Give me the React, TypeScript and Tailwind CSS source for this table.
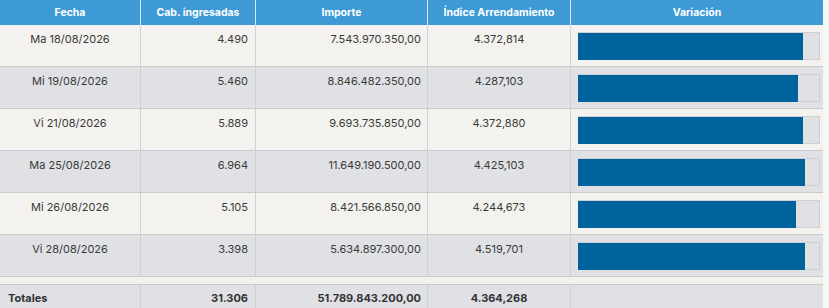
import React from "react";

const rows = [
  { f: "Ma 18/08/2026", c: "4.490", i: "7.543.970.350,00", x: "4.372,814", w: 225 },
  { f: "Mi 19/08/2026", c: "5.460", i: "8.846.482.350,00", x: "4.287,103", w: 220 },
  { f: "Vi 21/08/2026", c: "5.889", i: "9.693.735.850,00", x: "4.372,880", w: 225 },
  { f: "Ma 25/08/2026", c: "6.964", i: "11.649.190.500,00", x: "4.425,103", w: 227 },
  { f: "Mi 26/08/2026", c: "5.105", i: "8.421.566.850,00", x: "4.244,673", w: 218 },
  { f: "Vi 28/08/2026", c: "3.398", i: "5.634.897.300,00", x: "4.519,701", w: 227 },
];

const grid = "grid grid-cols-[141px_115px_172px_143px_252px]";

export default function App() {
  return (
    <div
      className="w-[829px] h-[308px] overflow-hidden bg-[#f7f7f7] text-[11px] text-[#3a3a3a]"
      style={{ fontFamily: "Inter, 'Noto Sans', sans-serif" }}
    >
      <div className="w-[823px]">
        <div className={`${grid} h-[25px] bg-[#3d9ad5] text-white font-bold text-[10.5px]`}>
          {["Fecha", "Cab. ingresadas", "Importe", "Índice Arrendamiento", "Variación"].map((h, k) => (
            <div
              key={h}
              className={`flex items-center justify-center ${k < 4 ? "border-r border-[#d6e9f6]" : ""}`}
            >
              {h}
            </div>
          ))}
        </div>
        {rows.map((r, k) => (
          <div
            key={r.f}
            className={`${grid} h-[42px] border-b border-[#c8cacd] ${k % 2 === 0 ? "bg-[#f3f2ee]" : "bg-[#dfe1e5]"}`}
          >
            <div className="border-r border-[#cfd0d2] text-center pt-[6px]">{r.f}</div>
            <div className="border-r border-[#cfd0d2] text-right pr-[7px] pt-[6px]">{r.c}</div>
            <div className="border-r border-[#cfd0d2] text-right pr-[6px] pt-[6px]">{r.i}</div>
            <div className="border-r border-[#cfd0d2] text-center pt-[6px]">{r.x}</div>
            <div className="pl-[7px] pr-[3px] pt-[7px]">
              <div className="h-[28px] bg-[#dfe1e4] border border-[#cdd0d3] border-l-0 w-[242px]">
                <div className="h-[27px] bg-[#00639b]" style={{ width: r.w }} />
              </div>
            </div>
          </div>
        ))}
        <div className="h-[8px] bg-[#f3f2ea] border-b border-[#c8cacd]" />
        <div className={`${grid} h-[26px] bg-[#dfe1e5] font-bold text-[#333]`}>
          <div className="border-r border-[#cfd0d2] pl-[8px] flex items-center">Totales</div>
          <div className="border-r border-[#cfd0d2] text-right pr-[7px] flex items-center justify-end">31.306</div>
          <div className="border-r border-[#cfd0d2] pr-[6px] flex items-center justify-end">51.789.843.200,00</div>
          <div className="border-r border-[#cfd0d2] flex items-center justify-center">4.364,268</div>
          <div />
        </div>
      </div>
    </div>
  );
}
